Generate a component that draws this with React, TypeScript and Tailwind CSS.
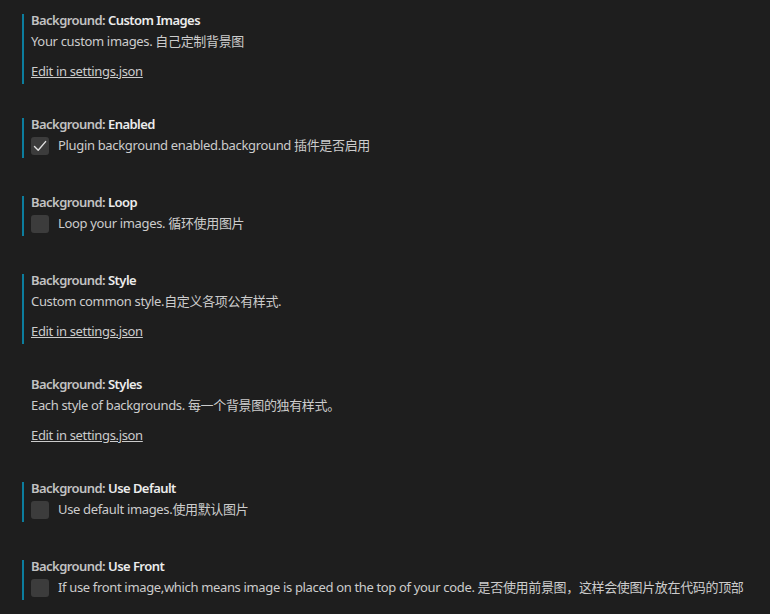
type Setting = {
  label: string;
  description: string;
  kind: 'json' | 'checkbox';
  checked?: boolean;
  modified: boolean;
};

const SETTINGS: Setting[] = [
  { label: 'Custom Images', description: 'Your custom images. 自己定制背景图', kind: 'json', modified: true },
  { label: 'Enabled', description: 'Plugin background enabled.background 插件是否启用', kind: 'checkbox', checked: true, modified: true },
  { label: 'Loop', description: 'Loop your images. 循环使用图片', kind: 'checkbox', modified: true },
  { label: 'Style', description: 'Custom common style.自定义各项公有样式.', kind: 'json', modified: true },
  { label: 'Styles', description: 'Each style of backgrounds. 每一个背景图的独有样式。', kind: 'json', modified: false },
  { label: 'Use Default', description: 'Use default images.使用默认图片', kind: 'checkbox', modified: true },
  {
    label: 'Use Front',
    description:
      'If use front image,which means image is placed on the top of your code. 是否使用前景图，这样会使图片放在代码的顶部',
    kind: 'checkbox',
    modified: true,
  },
];

function CheckMark() {
  return (
    <svg width="18" height="18" viewBox="0 0 18 18" fill="none">
      <path d="M3.5 9.6 L7.2 13.2 L14.6 4.6" stroke="#e2e2e2" strokeWidth="1.4" strokeLinecap="round" strokeLinejoin="round" />
    </svg>
  );
}

function SettingItem({ setting }: { setting: Setting }) {
  const isJson = setting.kind === 'json';
  return (
    <div className={`flex pl-[22px] pt-[11px] ${isJson ? 'pb-[20px]' : 'pb-[24px]'}`}>
      <div className={`w-[2px] shrink-0 mt-[3px] ${setting.modified ? 'bg-[#0c7d9d]' : 'bg-transparent'}`} />
      <div className="pl-[7px] pb-[4px] min-w-0 tracking-[-0.34px]">
        <div className="h-[18px] leading-[18px] font-semibold whitespace-nowrap tracking-[-0.55px]">
          <span className="text-[#c2c2c2]">Background: </span>
          <span className="text-[#ececec]">{setting.label}</span>
        </div>
        {isJson ? (
          <>
            <div className="mt-[3px] h-[18px] leading-[18px] text-[#cccccc] whitespace-nowrap">{setting.description}</div>
            <a href="#" className="mt-[12px] block h-[18px] leading-[18px] text-[#cccccc] underline w-fit">
              Edit in settings.json
            </a>
          </>
        ) : (
          <div className="mt-[3px] flex items-start gap-[9px] h-[18px]">
            <div className="mt-[1px] w-[18px] h-[18px] shrink-0 rounded-[3px] bg-[#3c3c3c] flex items-center justify-center">
              {setting.checked && <CheckMark />}
            </div>
            <span className="leading-[18px] text-[#cccccc] whitespace-nowrap">{setting.description}</span>
          </div>
        )}
      </div>
    </div>
  );
}

export default function App() {
  return (
    <div className="w-[770px] h-[614px] overflow-hidden bg-[#1e1e1e] text-[13px] font-['Noto_Sans','Noto_Sans_CJK_SC',sans-serif]">
      {SETTINGS.map((s) => (
        <SettingItem key={s.label} setting={s} />
      ))}
    </div>
  );
}
